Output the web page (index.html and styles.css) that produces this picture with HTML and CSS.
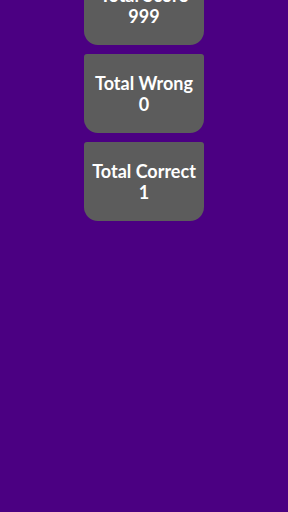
FILE: index.html
```html
<!DOCTYPE html>
<html lang="en">
<head>
    <meta charset="UTF-8">
    <meta name="viewport" content="width=device-width, initial-scale=1.0">
    <title>Stats</title>
    <link rel="stylesheet" href="styles.css">
</head>
<body>
    <div class="stats">
        <div class="stat-card">
            <div class="stat-label">Total Score</div>
            <div class="stat-value">999</div>
        </div>
        <div class="stat-card">
            <div class="stat-label">Total Wrong</div>
            <div class="stat-value">0</div>
        </div>
        <div class="stat-card">
            <div class="stat-label">Total Correct</div>
            <div class="stat-value">1</div>
        </div>
    </div>
</body>
</html>
```

FILE: styles.css
```css
* {
    margin: 0;
    padding: 0;
    box-sizing: border-box;
}

html, body {
    height: 100%;
}

body {
    font-family: Lato, 'Open Sans', sans-serif;
    background: #4b0082;
    color: white;
    overflow: hidden;
}

.stats {
    display: flex;
    flex-direction: column;
    align-items: center;
    gap: 9px;
    margin-top: -34px;
}

.stat-card {
    width: 120px;
    height: 79px;
    background: #5c5c5c;
    border-radius: 3px 3px 14px 14px;
    display: flex;
    flex-direction: column;
    justify-content: center;
    align-items: center;
    text-align: center;
    font-weight: bold;
    font-size: 18px;
    line-height: 21px;
}
```
